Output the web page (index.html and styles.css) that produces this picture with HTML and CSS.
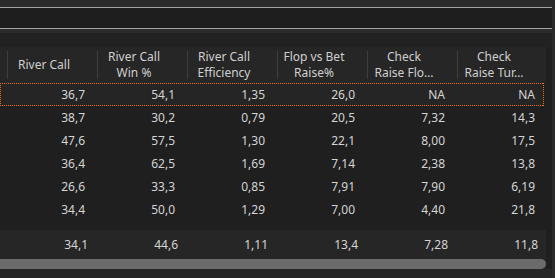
FILE: index.html
```
<!DOCTYPE html>
<html>
<head>
<meta charset="utf-8">
<link rel="stylesheet" href="styles.css">
</head>
<body>
<div class="app">
  <div class="topstrip"></div>
  <div class="searchbox"></div>
  <div class="strip"></div>
  <div class="toolbar"></div>
  <div class="grid">
    <div class="head">
      <div class="hcell"></div>
      <div class="hcell"><span class="sep"></span><div class="htext">River Call</div></div>
      <div class="hcell"><span class="sep"></span><div class="htext">River Call<br>Win %</div></div>
      <div class="hcell"><span class="sep"></span><div class="htext">River Call<br>Efficiency</div></div>
      <div class="hcell"><span class="sep"></span><div class="htext">Flop vs Bet<br>Raise%</div></div>
      <div class="hcell"><span class="sep"></span><div class="htext">Check<br>Raise Flo…</div></div>
      <div class="hcell"><span class="sep"></span><div class="htext">Check<br>Raise Tur…</div></div>
    </div>
    <div class="rows">
      <div class="row selected"><div></div><div>36,7</div><div>54,1</div><div>1,35</div><div>26,0</div><div>NA</div><div>NA</div></div>
      <div class="row"><div></div><div>38,7</div><div>30,2</div><div>0,79</div><div>20,5</div><div>7,32</div><div>14,3</div></div>
      <div class="row"><div></div><div>47,6</div><div>57,5</div><div>1,30</div><div>22,1</div><div>8,00</div><div>17,5</div></div>
      <div class="row"><div></div><div>36,4</div><div>62,5</div><div>1,69</div><div>7,14</div><div>2,38</div><div>13,8</div></div>
      <div class="row"><div></div><div>26,6</div><div>33,3</div><div>0,85</div><div>7,91</div><div>7,90</div><div>6,19</div></div>
      <div class="row"><div></div><div>34,4</div><div>50,0</div><div>1,29</div><div>7,00</div><div>4,40</div><div>21,8</div></div>
    </div>
    <div class="summary"><div></div><div>34,1</div><div>44,6</div><div>1,11</div><div>13,4</div><div>7,28</div><div>11,8</div></div>
    <div class="scrollbar"><div class="thumb"></div></div>
    <div class="bottom"></div>
  </div>
</div>
</body>
</html>
```
FILE: styles.css
```
html, body {
  margin: 0;
  padding: 0;
  background: #1f1f1f;
}
body {
  font-family: "Noto Sans", "Open Sans", sans-serif;
  font-size: 12px;
  color: #d4d4d4;
  width: 555px;
  height: 278px;
  overflow: hidden;
}
.app {
  display: flex;
  flex-direction: column;
  border-right: 3px solid #2a2a2a;
  box-sizing: border-box;
  width: 555px;
  height: 278px;
}
.topstrip {
  height: 7px;
  background: #2b2b2b;
}
.searchbox {
  height: 20px;
  background: #1e1e1e;
  border-top: 1px solid #a3a3a3;
  border-bottom: 1px solid #a3a3a3;
}
.strip {
  height: 4px;
  background: #2b2b2b;
}
.toolbar {
  height: 14px;
  background: #222222;
}
.grid {
  display: flex;
  flex-direction: column;
}
.head {
  display: grid;
  grid-template-columns: 7px repeat(6, 90px);
  height: 36px;
  width: 546px;
  background: #262626;
  color: #cfcfcf;
}
.hcell {
  display: flex;
  align-items: center;
}
.sep {
  width: 1px;
  height: 28px;
  background: #3d3d3d;
  flex: none;
}
.htext {
  width: 72px;
  text-align: center;
  line-height: 16px;
  white-space: nowrap;
}
.rows {
  display: flex;
  flex-direction: column;
  padding-bottom: 9px;
}
.row {
  display: grid;
  grid-template-columns: 7px repeat(6, 90px);
  height: 23px;
  line-height: 23px;
  width: 546px;
  box-sizing: border-box;
}
.row > div, .summary > div {
  text-align: right;
  padding-right: 12px;
}
.row > div:first-child, .summary > div:first-child {
  padding-right: 0;
}
.row.selected {
  width: 544px;
  background-color: #252525;
  background-image:
    repeating-linear-gradient(to right, #e8700c 0 1px, transparent 1px 2px),
    repeating-linear-gradient(to right, #e8700c 0 1px, transparent 1px 2px),
    repeating-linear-gradient(to bottom, #e8700c 0 1px, transparent 1px 2px),
    repeating-linear-gradient(to bottom, #e8700c 0 1px, transparent 1px 2px);
  background-size: 100% 1px, 100% 1px, 1px 100%, 1px 100%;
  background-position: left top, left bottom, left top, right top;
  background-repeat: no-repeat;
}
.summary {
  display: grid;
  grid-template-columns: 9px repeat(6, 90px);
  height: 29px;
  line-height: 29px;
  width: 546px;
  background: #262626;
}
.summary > div {
  padding-right: 11px;
}
.scrollbar {
  height: 10px;
  width: 546px;
  background: #262626;
}
.thumb {
  height: 10px;
  width: 546px;
  background: #6b6b6b;
  border-radius: 0 5px 5px 0;
}
.bottom {
  height: 9px;
  background: #262626;
}
```
